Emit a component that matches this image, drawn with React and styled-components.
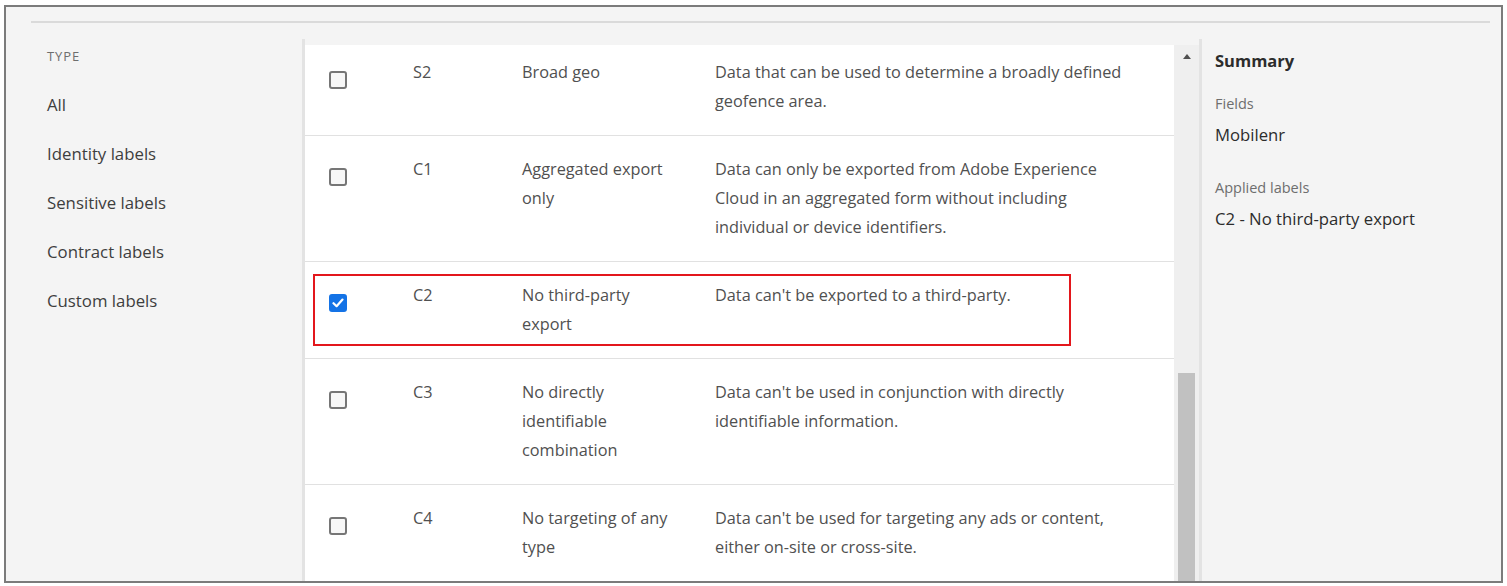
import React from "react";
import styled, { createGlobalStyle } from "styled-components";

const Global = createGlobalStyle`
  html, body { margin: 0; padding: 0; background: #ffffff; }
  body { font-family: "Open Sans", "Liberation Sans", sans-serif; }
  * { box-sizing: border-box; }
`;

const Page = styled.div`
  width: 1507px;
  height: 586px;
  padding: 5px 4px 3px 4px;
  background: #ffffff;
`;

const Frame = styled.div`
  height: 100%;
  border: 2px solid #7b7b7b;
  background: #f4f4f4;
  display: flex;
  flex-direction: column;
  overflow: hidden;
`;

const TopRule = styled.div`
  margin: 14px 11px 0 25px;
  height: 2px;
  background: #dadada;
  flex: none;
`;

const Body = styled.div`
  flex: 1;
  display: flex;
  margin-top: 16px;
  min-height: 0;
`;

const Sidebar = styled.div`
  width: 296px;
  flex: none;
  padding: 8px 0 0 41px;
`;

const SideHeading = styled.div`
  font-size: 13px;
  letter-spacing: 0.9px;
  color: #6e6e6e;
  line-height: 18px;
  margin-bottom: 28px;
`;

const SideItem = styled.div`
  font-size: 16.8px;
  color: #3e3e3e;
  line-height: 24px;
  height: 49px;
`;

const ListColumn = styled.div`
  width: 872px;
  flex: none;
  border-left: 3px solid #e3e3e3;
  padding-top: 6px;
  display: flex;
  flex-direction: column;
  min-height: 0;
`;

const Viewport = styled.div`
  flex: 1;
  background: #ffffff;
  overflow: hidden;
  position: relative;
`;

const List = styled.div`
  margin-top: -6px;
`;

const Row = styled.div`
  display: grid;
  grid-template-columns: 84px 109px 193px 1fr;
  padding: 19px 0 19px 24px;
  border-bottom: 1px solid #e1e1e1;
  font-size: 16.3px;
  line-height: 29px;
  color: #505050;
`;

const Cell = styled.div`
  padding-right: ${(p) => p.$pr || 0}px;
`;

const Box = styled.div`
  width: 18px;
  height: 18px;
  margin-top: 13px;
  border-radius: 3px;
  border: 2px solid ${(p) => (p.$checked ? "#1473e6" : "#767676")};
  background: ${(p) => (p.$checked ? "#1473e6" : "#f7f7f7")};
  display: flex;
  align-items: center;
  justify-content: center;
`;

const Highlight = styled.div`
  position: absolute;
  left: 8px;
  top: 229px;
  width: 758px;
  height: 72px;
  border: 2px solid #e3171c;
  pointer-events: none;
`;

const ScrollTrack = styled.div`
  width: 25px;
  flex: none;
  margin-top: 6px;
  background: #efefef;
  display: flex;
  flex-direction: column;
  align-items: center;
`;

const ArrowUp = styled.div`
  margin-top: 9px;
  width: 0;
  height: 0;
  border-left: 4px solid transparent;
  border-right: 4px solid transparent;
  border-bottom: 5px solid #505050;
`;

const Thumb = styled.div`
  margin-top: 314px;
  width: 17px;
  flex: 1;
  background: #c1c1c1;
`;

const Summary = styled.div`
  flex: 1;
  border-left: 3px solid #e3e3e3;
  padding: 10px 0 0 13px;
`;

const SummaryTitle = styled.div`
  font-size: 16.5px;
  font-weight: 700;
  color: #2c2c2c;
  line-height: 24px;
  margin-bottom: 21px;
`;

const FieldLabel = styled.div`
  font-size: 14.5px;
  color: #6e6e6e;
  line-height: 20px;
  margin-bottom: 10px;
`;

const FieldValue = styled.div`
  font-size: 16.7px;
  color: #2c2c2c;
  line-height: 22px;
  margin-bottom: ${(p) => p.$mb || 0}px;
`;

const rows = [
  { code: "S2", name: "Broad geo", desc: "Data that can be used to determine a broadly defined geofence area." },
  { code: "C1", name: "Aggregated export only", desc: "Data can only be exported from Adobe Experience Cloud in an aggregated form without including individual or device identifiers." },
  { code: "C2", name: "No third-party export", desc: "Data can't be exported to a third-party.", checked: true },
  { code: "C3", name: "No directly identifiable combination", desc: "Data can't be used in conjunction with directly identifiable information." },
  { code: "C4", name: "No targeting of any type", desc: "Data can't be used for targeting any ads or content, either on-site or cross-site." },
];

const Check = () => (
  <svg width="12" height="10" viewBox="0 0 12 10">
    <path d="M1.5 5.2 L4.6 8.2 L10.5 1.6" fill="none" stroke="#fff" strokeWidth="2.2" strokeLinecap="round" strokeLinejoin="round" />
  </svg>
);

export default function App() {
  return (
    <>
      <Global />
      <Page>
        <Frame>
          <TopRule />
          <Body>
            <Sidebar>
              <SideHeading>TYPE</SideHeading>
              {["All", "Identity labels", "Sensitive labels", "Contract labels", "Custom labels"].map((t) => (
                <SideItem key={t}>{t}</SideItem>
              ))}
            </Sidebar>
            <ListColumn>
              <Viewport>
                <List>
                  {rows.map((r) => (
                    <Row key={r.code}>
                      <Cell>
                        <Box $checked={r.checked}>{r.checked && <Check />}</Box>
                      </Cell>
                      <Cell>{r.code}</Cell>
                      <Cell $pr={38}>{r.name}</Cell>
                      <Cell $pr={39}>{r.desc}</Cell>
                    </Row>
                  ))}
                </List>
                <Highlight />
              </Viewport>
            </ListColumn>
            <ScrollTrack>
              <ArrowUp />
              <Thumb />
            </ScrollTrack>
            <Summary>
              <SummaryTitle>Summary</SummaryTitle>
              <FieldLabel>Fields</FieldLabel>
              <FieldValue $mb={32}>Mobilenr</FieldValue>
              <FieldLabel>Applied labels</FieldLabel>
              <FieldValue>C2 - No third-party export</FieldValue>
            </Summary>
          </Body>
        </Frame>
      </Page>
    </>
  );
}
